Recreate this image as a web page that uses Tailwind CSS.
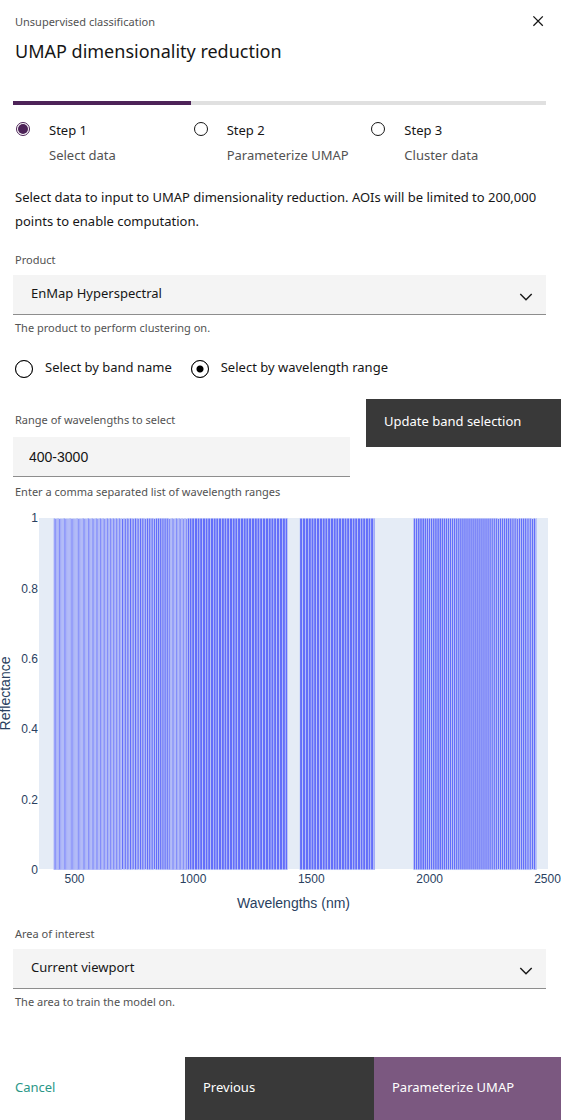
<!DOCTYPE html>
<html lang="en">
<head>
  <meta charset="UTF-8" />
  <meta name="viewport" content="width=device-width, initial-scale=1.0"/>
  <title>UMAP dimensionality reduction</title>
  <script src="https://cdn.jsdelivr.net/npm/@tailwindcss/browser@4"></script>
</head>
<body class="bg-white min-h-screen text-[13px] leading-6 text-[#161616] font-['Noto_Sans',sans-serif]">

  <!-- Header -->
  <header class="flex justify-between items-start pl-[15px] pr-[15px] pt-3">
    <div>
      <p class="text-[11px] leading-5 text-[#525252]">Unsupervised classification</p>
      <h1 class="mt-[3px] text-lg leading-8">UMAP dimensionality reduction</h1>
    </div>
    <button type="button" aria-label="Close" class="mt-0.5 size-4 flex items-center justify-center">
      <svg class="size-4" viewBox="0 0 16 16" fill="none" stroke="#161616" stroke-width="1.3">
        <path d="M3.4 2.4l9.4 9.4M12.8 2.4l-9.4 9.4" />
      </svg>
    </button>
  </header>

  <main>
    <!-- Progress steps -->
    <ol class="mt-[34px] ml-[13px] mr-[15px] grid grid-cols-3">
      <li class="flex gap-[18px] border-t-4 border-[#4d2358] pl-0.5 pt-[13px]">
        <svg class="size-4 mt-[3px] shrink-0" viewBox="0 0 16 16">
          <circle cx="8" cy="8" r="6.5" fill="none" stroke="#4d2358" />
          <circle cx="8" cy="8" r="5" fill="#4d2358" />
        </svg>
        <div>
          <p>Step 1</p>
          <p class="mt-px text-[#525252]">Select data</p>
        </div>
      </li>
      <li class="flex gap-[18px] border-t-4 border-[#e0e0e0] pl-0.5 pt-[13px]">
        <svg class="size-4 mt-[3px] shrink-0" viewBox="0 0 16 16">
          <circle cx="8" cy="8" r="6.5" fill="none" stroke="#161616" />
        </svg>
        <div>
          <p>Step 2</p>
          <p class="mt-px text-[#525252]">Parameterize UMAP</p>
        </div>
      </li>
      <li class="flex gap-[18px] border-t-4 border-[#e0e0e0] pl-0.5 pt-[13px]">
        <svg class="size-4 mt-[3px] shrink-0" viewBox="0 0 16 16">
          <circle cx="8" cy="8" r="6.5" fill="none" stroke="#161616" />
        </svg>
        <div>
          <p>Step 3</p>
          <p class="mt-px text-[#525252]">Cluster data</p>
        </div>
      </li>
    </ol>

    <p class="mt-[18px] px-[15px]">Select data to input to UMAP dimensionality reduction. AOIs will be limited to 200,000 points to enable computation.</p>

    <!-- Product -->
    <div class="mt-[17px] ml-[13px] mr-[15px]">
      <label for="product" class="block pl-0.5 text-[11px] leading-5 text-[#525252]">Product</label>
      <div class="relative mt-[5px]">
        <select id="product" class="block w-full h-10 appearance-none bg-[#f4f4f4] border-b border-[#8d8d8d] pl-[18px] pr-10 pb-1 outline-none">
          <option>EnMap Hyperspectral</option>
        </select>
        <svg class="absolute right-3 top-3.5 size-4 pointer-events-none" viewBox="0 0 16 16" fill="none" stroke="#161616" stroke-width="1.4">
          <path d="M2.3 5l5.7 5.7L13.7 5" />
        </svg>
      </div>
      <p class="mt-[3px] pl-0.5 text-[11px] leading-5 text-[#525252]">The product to perform clustering on.</p>
    </div>

    <!-- Selection mode -->
    <fieldset class="mt-[17px] px-[15px] flex gap-[19px]">
      <label class="flex items-center gap-3">
        <input type="radio" name="mode" class="appearance-none mt-1 size-[18px] rounded-full border-[1px] border-black outline outline-black/40 -outline-offset-1 checked:bg-[radial-gradient(circle,#000_3px,transparent_4px)]" />
        Select by band name
      </label>
      <label class="flex items-center gap-3">
        <input type="radio" name="mode" checked class="appearance-none mt-1 size-[18px] rounded-full border-[1px] border-black outline outline-black/40 -outline-offset-1 checked:bg-[radial-gradient(circle,#000_3px,transparent_4px)]" />
        Select by wavelength range
      </label>
    </fieldset>

    <!-- Wavelength range -->
    <div class="mt-5 pl-[13px] flex items-start gap-4">
      <div class="flex-1 pt-[11px]">
        <label for="range" class="block pl-0.5 text-[11px] leading-5 text-[#525252]">Range of wavelengths to select</label>
        <input id="range" type="text" value="400-3000" class="block mt-[7px] w-full h-10 bg-[#f4f4f4] border-b border-[#8d8d8d] px-4 text-sm font-['Liberation_Sans',sans-serif] outline-none" />
        <p class="mt-[5px] pl-0.5 text-[11px] leading-5 text-[#525252]">Enter a comma separated list of wavelength ranges</p>
      </div>
      <button type="button" class="w-[195px] h-12 bg-[#393939] text-white text-left pl-[18px] pb-1">Update band selection</button>
    </div>

    <!-- Reflectance chart -->
    <svg id="chart" class="block w-full font-['Liberation_Sans',sans-serif]" viewBox="0 0 561 422" fill="#2a3f5f" font-size="12">
      <rect x="39" y="16" width="509" height="351" fill="#e5ecf6" />
      <g id="bars" fill="#636efa" stroke="#e5ecf6" stroke-width="0.5" stroke-opacity="0.85"></g>
      <g text-anchor="end">
        <text x="38" y="20">1</text>
        <text x="38" y="91">0.8</text>
        <text x="38" y="161">0.6</text>
        <text x="38" y="231">0.4</text>
        <text x="38" y="302">0.2</text>
        <text x="38" y="372">0</text>
      </g>
      <g text-anchor="middle">
        <text x="74.5" y="381">500</text>
        <text x="193" y="381">1000</text>
        <text x="311.3" y="381">1500</text>
        <text x="429.7" y="381">2000</text>
        <text x="547.5" y="381">2500</text>
        <text x="293.5" y="406" font-size="14">Wavelengths (nm)</text>
        <text transform="translate(10 191.5) rotate(-90)" font-size="14">Reflectance</text>
      </g>
    </svg>

    <!-- Area of interest -->
    <div class="ml-[13px] mr-[15px]">
      <label for="area" class="block pl-0.5 text-[11px] leading-5 text-[#525252]">Area of interest</label>
      <div class="relative mt-[5px]">
        <select id="area" class="block w-full h-10 appearance-none bg-[#f4f4f4] border-b border-[#8d8d8d] pl-[18px] pr-10 pb-1 outline-none">
          <option>Current viewport</option>
        </select>
        <svg class="absolute right-3 top-3.5 size-4 pointer-events-none" viewBox="0 0 16 16" fill="none" stroke="#161616" stroke-width="1.4">
          <path d="M2.3 5l5.7 5.7L13.7 5" />
        </svg>
      </div>
      <p class="mt-[3px] pl-0.5 text-[11px] leading-5 text-[#525252]">The area to train the model on.</p>
    </div>
  </main>

  <!-- Actions -->
  <footer class="mt-[45px] grid grid-cols-[185fr_189fr_187fr] h-[63px]">
    <button type="button" class="text-left pl-[15px] pb-1 text-[#2a9787]">Cancel</button>
    <button type="button" class="text-left pl-[18px] pb-1 bg-[#393939] text-white">Previous</button>
    <button type="button" class="text-left pl-[18px] pb-1 bg-[#7b5880] text-white">Parameterize UMAP</button>
  </footer>

  <script>
    // Detector ranges in nm: start, end, band spacing at the start and at the end
    const ranges = [
      [412, 480, 5.6, 4.8],
      [480, 905, 4.8, 8.3],
      [905, 985, 5.6, 6.6],
      [985, 1400, 11.2, 12],
      [1452, 1769, 12, 11],
      [1932, 2452, 9.2, 7.7],
    ];
    const toX = nm => 74.5 + (nm - 500) * 0.2367;
    const bars = document.getElementById("bars");

    ranges.forEach(([start, end, first, last]) => {
      let nm = start;
      while (nm < end) {
        let step = first + (last - first) * (nm - start) / (end - start);
        if (nm + step * 1.5 > end) step = end - nm;
        const bar = document.createElementNS("http://www.w3.org/2000/svg", "rect");
        bar.setAttribute("x", toX(nm));
        bar.setAttribute("y", 16.2);
        bar.setAttribute("width", step * 0.2367);
        bar.setAttribute("height", 351.6);
        // narrow bands blend into their neighbours
        if (step < 6.6) {
          bar.setAttribute("fill", "#838dfa");
          bar.setAttribute("stroke-width", 0.3);
        }
        bars.appendChild(bar);
        nm += step;
      }
    });
  </script>
</body>
</html>
